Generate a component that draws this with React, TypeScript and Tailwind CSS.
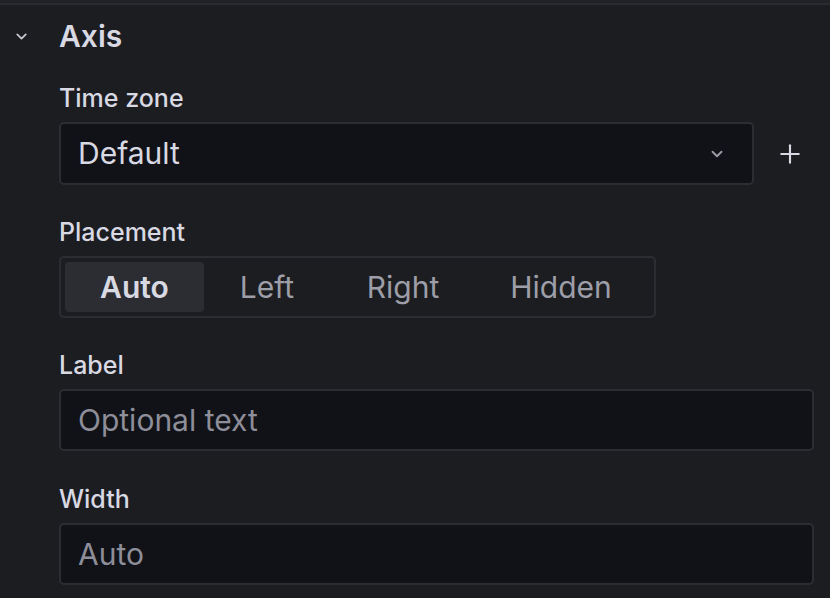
import { ChevronDown, Plus } from 'lucide-react';

const placements = ['Auto', 'Left', 'Right', 'Hidden'];

function FieldLabel({ children }: { children: React.ReactNode }) {
  return <div className="text-[25px] leading-[26px] font-medium text-[#d8d9e3] mb-[11px]">{children}</div>;
}

function TextInput({ placeholder }: { placeholder: string }) {
  return (
    <div className="h-[62px] w-[755px] rounded-[5px] border-2 border-[#2c2d33] bg-[#111217] flex items-center px-[17px]">
      <span className="text-[30px] text-[#8d8e99]">{placeholder}</span>
    </div>
  );
}

export default function App() {
  return (
    <div
      className="w-[830px] h-[598px] overflow-hidden bg-[#1c1d21] text-[#ccccdc]"
      style={{ fontFamily: 'Inter, "Noto Sans", sans-serif' }}
    >
      <div className="h-[3px] bg-[#212227]" />
      <div className="h-[2px] bg-[#2a2b30]" />

      {/* section header */}
      <div className="flex items-center h-[62px] pl-[13px]">
        <ChevronDown className="w-[17px] h-[17px] text-[#c4c5d0]" strokeWidth={2.5} />
        <span className="ml-[29px] text-[30px] font-semibold text-[#d8d9e3]">Axis</span>
      </div>

      <div className="pl-[59px] pt-[18px]">
        <FieldLabel>Time zone</FieldLabel>
        <div className="flex items-center">
          <div className="h-[63px] w-[695px] rounded-[5px] border-2 border-[#2c2d33] bg-[#111217] flex items-center justify-between pl-[17px] pr-[26px]">
            <span className="text-[30px] text-[#d8d9e3]">Default</span>
            <ChevronDown className="w-[18px] h-[18px] text-[#9a9ba5]" strokeWidth={2.5} />
          </div>
          <Plus className="ml-[21px] w-[30px] h-[30px] text-[#d8d9e3]" strokeWidth={1.7} />
        </div>

        <div className="mt-[34px]">
          <FieldLabel>Placement</FieldLabel>
          <div className="flex h-[62px] w-[597px] rounded-[5px] border-2 border-[#2c2d33] p-[4px]">
            {placements.map((p, i) => (
              <div
                key={p}
                className={`flex items-center justify-center rounded-[4px] text-[30px] ${
                  i === 0
                    ? 'w-[139px] bg-[#2c2d33] text-[#d8d9e3] font-semibold'
                    : 'text-[#9d9ea8] ' + (i === 1 ? 'w-[126px]' : i === 2 ? 'w-[146px]' : 'w-[170px]')
                }`}
              >
                {p}
              </div>
            ))}
          </div>
        </div>

        <div className="mt-[34px]">
          <FieldLabel>Label</FieldLabel>
          <TextInput placeholder="Optional text" />
        </div>

        <div className="mt-[35px]">
          <FieldLabel>Width</FieldLabel>
          <TextInput placeholder="Auto" />
        </div>
      </div>
    </div>
  );
}
